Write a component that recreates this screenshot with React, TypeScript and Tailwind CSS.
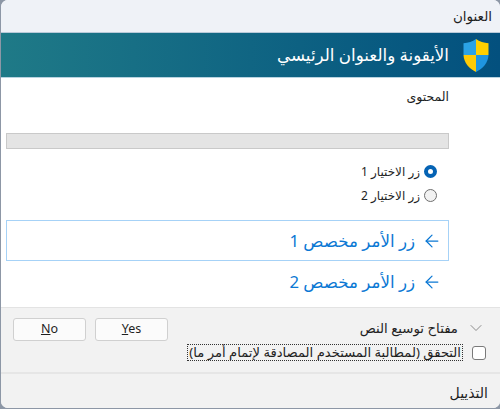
import { ArrowLeft, ChevronDown } from "lucide-react";

function Shield() {
  return (
    <svg width="26" height="33" viewBox="0 0 26 33">
      <path d="M13 0 C9.5 2.5 5 4 0.5 4.3 L0.5 16 L13 16 Z" fill="#2ba3e6" />
      <path d="M13 0 C16.5 2.5 21 4 25.5 4.3 L25.5 16 L13 16 Z" fill="#ffcf00" />
      <path d="M0.5 16 L13 16 L13 33 C6 29.5 1 24 0.5 16 Z" fill="#ffcb05" />
      <path d="M25.5 16 L13 16 L13 33 C20 29.5 25 24 25.5 16 Z" fill="#1f95e0" />
    </svg>
  );
}

function CommandLink({ label, focused }: { label: string; focused?: boolean }) {
  return (
    <div
      className={`flex items-center gap-[7px] h-[41px] pr-[6px] border text-[#0b78d4] text-[16.7px] ${
        focused ? "border-[#a6d2f7]" : "border-transparent"
      }`}
    >
      <ArrowLeft size={20} strokeWidth={1.5} className="shrink-0" />
      <span>{label}</span>
    </div>
  );
}

export default function App() {
  return (
    <div className="w-[500px] h-[409px] bg-[#8d97a6]">
      <div
        dir="rtl"
        className="w-[499px] h-[408px] ml-px flex flex-col overflow-hidden rounded-[7px] bg-white text-[#1f1f1f] text-[12px] font-['Noto_Sans','DejaVu_Sans',sans-serif]"
      >
        {/* Title bar */}
        <div className="h-[33px] shrink-0 flex items-center pr-[8px] bg-[#eff2f7] text-[13.5px] border-b border-[#b9cad9]">
          العنوان
        </div>

        {/* Banner */}
        <div className="h-[45px] shrink-0 flex items-center gap-[14px] pr-[11px] bg-gradient-to-l from-[#03507e] to-[#1f7a87] border-b border-[#b8d3e0] text-white text-[16.7px]">
          <Shield />
          <span>الأيقونة والعنوان الرئيسي</span>
        </div>

        {/* Content */}
        <div className="flex-1 flex flex-col pl-[5px] pr-[51px] pt-[9px]">
          <div className="h-[20px] flex items-center text-[12.5px]">المحتوى</div>
          <div className="h-[16px] mt-[26px] bg-[#e4e4e4] border border-[#c9c9c9]" />
          <div className="mt-[12px] flex flex-col gap-[3px] pr-[12px]">
            <div className="h-[21px] flex items-center gap-[4px]">
              <span className="w-[13px] h-[13px] rounded-full border-[4px] border-[#0563b4] bg-white" />
              <span>زر الاختيار 1</span>
            </div>
            <div className="h-[21px] flex items-center gap-[4px]">
              <span className="w-[13px] h-[13px] rounded-full border border-[#6f6f6f] bg-[#f2f2f2]" />
              <span>زر الاختيار 2</span>
            </div>
          </div>
          <div className="mt-[14px] flex flex-col">
            <CommandLink label="زر الأمر مخصص 1" focused />
            <CommandLink label="زر الأمر مخصص 2" />
          </div>
        </div>

        {/* Buttons area */}
        <div className="h-[65px] shrink-0 flex flex-col bg-[#f2f2f2] border-t border-[#e3e3e3] pr-[14px] pl-[12px] pt-[10px] relative">
          <div className="flex items-start">
            <ChevronDown size={20} strokeWidth={1} className="text-[#777777] shrink-0" />
            <span className="mr-[8px] text-[13.3px] leading-[20px]">مفتاح توسيع النص</span>
            <div className="mr-auto flex gap-[9px]">
              <button className="w-[73px] h-[23px] bg-[#fbfbfb] border border-[#d0d0d0] rounded-[3px] text-[12.5px] font-['Noto_Sans',sans-serif]">
                <span className="underline">Y</span>es
              </button>
              <button className="w-[73px] h-[23px] bg-[#fbfbfb] border border-[#d0d0d0] rounded-[3px] text-[12.5px] font-['Noto_Sans',sans-serif]">
                <span className="underline">N</span>o
              </button>
            </div>
          </div>
          <div className="flex items-center absolute top-[36px] right-[14px]">
            <span className="w-[14px] h-[14px] rounded-[3px] border border-[#7a7a7a] bg-white shrink-0" />
            <span className="mr-[9px] px-[1px] h-[17px] flex items-center border border-dotted border-[#333] whitespace-nowrap text-[13.15px]">
              التحقق (لمطالبة المستخدم المصادقة لإتمام أمر ما)
            </span>
          </div>
        </div>

        {/* Footer */}
        <div className="h-[36px] shrink-0 flex items-center pt-[2px] pr-[12px] bg-[#f2f2f2] border-t-2 border-[#e6e6e6] text-[14px]">
          التذييل
        </div>
      </div>
    </div>
  );
}
